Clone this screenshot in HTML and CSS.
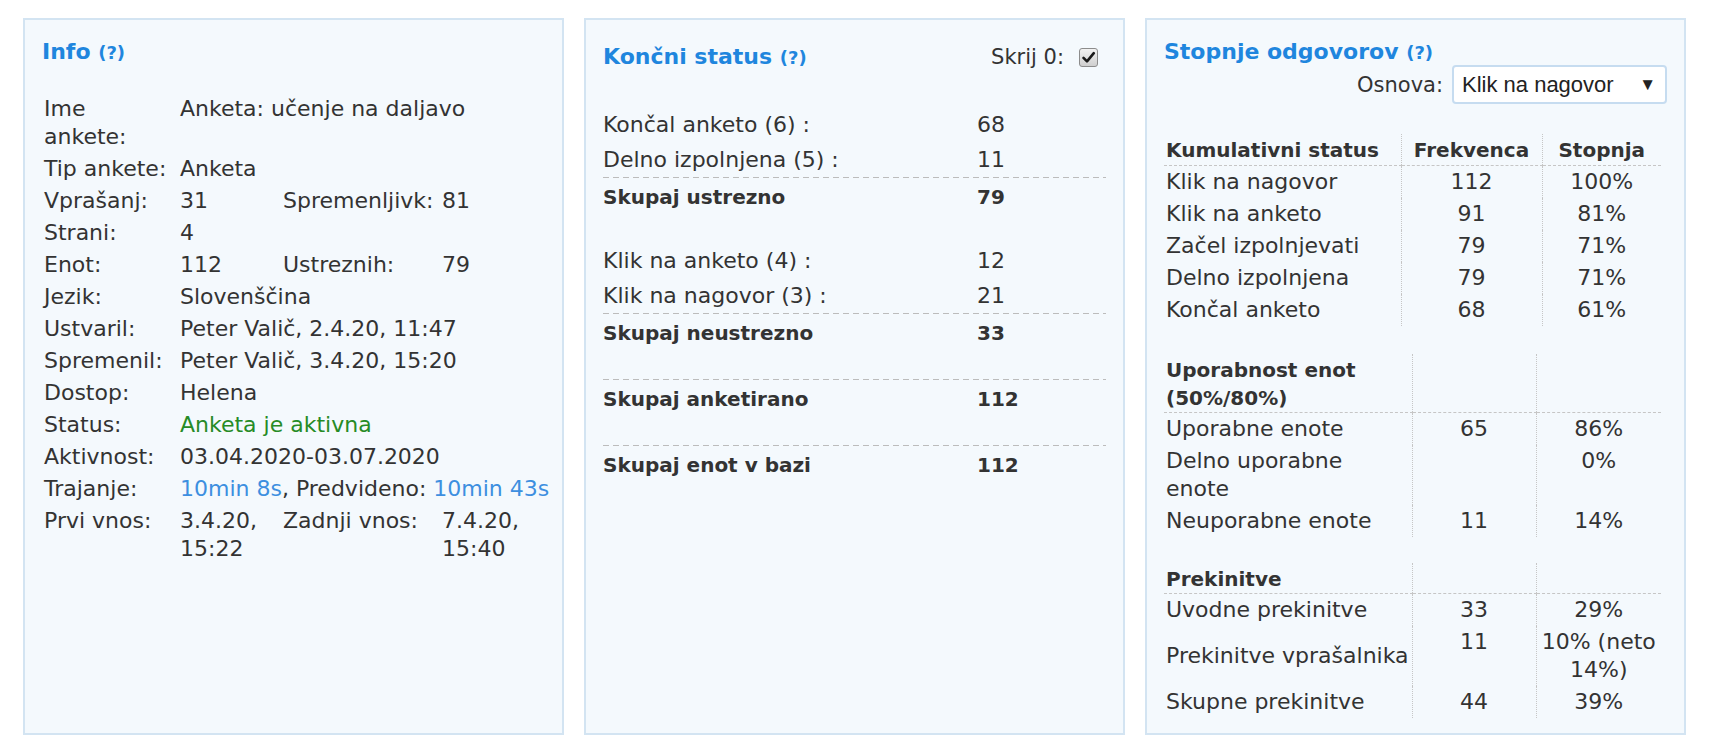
FILE: index.html
```html
<!DOCTYPE html>
<html lang="sl">
<head>
<meta charset="utf-8">
<title>Status ankete</title>
<link rel="stylesheet" href="styles.css">
</head>
<body>
<div class="dashboard">
  <section class="panel">
    <h2 class="panel-title">Info <span class="help">(?)</span></h2>
    <table class="info-table">
      <colgroup><col class="ic1"><col class="ic2"><col class="ic3"><col class="ic4"></colgroup>
      <tr><td class="lbl">Ime ankete:</td><td colspan="3">Anketa: učenje na daljavo</td></tr>
      <tr><td class="lbl">Tip ankete:</td><td colspan="3">Anketa</td></tr>
      <tr><td class="lbl">Vprašanj:</td><td>31</td><td>Spremenljivk:</td><td>81</td></tr>
      <tr><td class="lbl">Strani:</td><td colspan="3">4</td></tr>
      <tr><td class="lbl">Enot:</td><td>112</td><td>Ustreznih:</td><td>79</td></tr>
      <tr><td class="lbl">Jezik:</td><td colspan="3">Slovenščina</td></tr>
      <tr><td class="lbl">Ustvaril:</td><td colspan="3">Peter Valič, 2.4.20, 11:47</td></tr>
      <tr><td class="lbl">Spremenil:</td><td colspan="3">Peter Valič, 3.4.20, 15:20</td></tr>
      <tr><td class="lbl">Dostop:</td><td colspan="3">Helena</td></tr>
      <tr><td class="lbl">Status:</td><td colspan="3" class="active">Anketa je aktivna</td></tr>
      <tr><td class="lbl">Aktivnost:</td><td colspan="3">03.04.2020-03.07.2020</td></tr>
      <tr><td class="lbl">Trajanje:</td><td colspan="3" class="nowrap"><span class="time">10min 8s</span>, Predvideno: <span class="time">10min 43s</span></td></tr>
      <tr><td class="lbl">Prvi vnos:</td><td>3.4.20, 15:22</td><td>Zadnji vnos:</td><td>7.4.20, 15:40</td></tr>
    </table>
  </section>

  <section class="panel">
    <div class="ks-head">
      <h2 class="panel-title">Končni status <span class="help">(?)</span></h2>
      <label class="skrij">Skrij 0:<span class="checkbox"><svg viewBox="0 0 19 19" width="19" height="19"><path d="M4.5 9.8 L8 13.3 L14.8 5.2" fill="none" stroke="#1a1a1a" stroke-width="2.6" stroke-linecap="round" stroke-linejoin="round"/></svg></span></label>
    </div>
    <div class="ks-list">
      <div class="ks-row"><span class="ks-label">Končal anketo (6) :</span><span>68</span></div>
      <div class="ks-row"><span class="ks-label">Delno izpolnjena (5) :</span><span>11</span></div>
      <div class="ks-row total"><span class="ks-label">Skupaj ustrezno</span><span>79</span></div>
      <div class="ks-row"><span class="ks-label">Klik na anketo (4) :</span><span>12</span></div>
      <div class="ks-row"><span class="ks-label">Klik na nagovor (3) :</span><span>21</span></div>
      <div class="ks-row total"><span class="ks-label">Skupaj neustrezno</span><span>33</span></div>
      <div class="ks-row total"><span class="ks-label">Skupaj anketirano</span><span>112</span></div>
      <div class="ks-row total last"><span class="ks-label">Skupaj enot v bazi</span><span>112</span></div>
    </div>
  </section>

  <section class="panel">
    <h2 class="panel-title">Stopnje odgovorov <span class="help">(?)</span></h2>
    <div class="osnova">
      <span>Osnova:</span>
      <div class="select"><span>Klik na nagovor</span><span class="select-arrow">▼</span></div>
    </div>
    <table class="rate-table t-first">
      <colgroup><col class="r1"><col class="r2"><col class="r3"></colgroup>
      <tr><th class="lbl">Kumulativni status</th><th class="div">Frekvenca</th><th class="div">Stopnja</th></tr>
      <tr><td class="lbl">Klik na nagovor</td><td class="div">112</td><td class="div">100%</td></tr>
      <tr><td class="lbl">Klik na anketo</td><td class="div">91</td><td class="div">81%</td></tr>
      <tr><td class="lbl">Začel izpolnjevati</td><td class="div">79</td><td class="div">71%</td></tr>
      <tr><td class="lbl">Delno izpolnjena</td><td class="div">79</td><td class="div">71%</td></tr>
      <tr><td class="lbl">Končal anketo</td><td class="div">68</td><td class="div">61%</td></tr>
    </table>
    <table class="rate-table t-wide">
      <colgroup><col class="r1"><col class="r2"><col class="r3"></colgroup>
      <tr><th class="lbl">Uporabnost enot (50%/80%)</th><th class="div"></th><th class="div"></th></tr>
      <tr><td class="lbl">Uporabne enote</td><td class="div">65</td><td class="div">86%</td></tr>
      <tr><td class="lbl">Delno uporabne enote</td><td class="div"></td><td class="div top">0%</td></tr>
      <tr><td class="lbl">Neuporabne enote</td><td class="div">11</td><td class="div">14%</td></tr>
    </table>
    <table class="rate-table t-wide t-last">
      <colgroup><col class="r1"><col class="r2"><col class="r3"></colgroup>
      <tr><th class="lbl">Prekinitve</th><th class="div"></th><th class="div"></th></tr>
      <tr><td class="lbl">Uvodne prekinitve</td><td class="div">33</td><td class="div">29%</td></tr>
      <tr><td class="lbl nowrap">Prekinitve vprašalnika</td><td class="div top">11</td><td class="div">10% (neto 14%)</td></tr>
      <tr><td class="lbl">Skupne prekinitve</td><td class="div">44</td><td class="div">39%</td></tr>
    </table>
  </section>
</div>
</body>
</html>
```

FILE: styles.css
```css
* { box-sizing: border-box; }
html, body { margin: 0; padding: 0; background: #fff; }
body {
  font-family: "DejaVu Sans", "Noto Sans", sans-serif;
  font-size: 22px;
  color: #333;
}

.dashboard {
  display: flex;
  gap: 20px;
  height: 752px;
  padding: 18px 43px 17px 23px;
}

.panel {
  flex: 1 1 0;
  min-width: 0;
  background: #f4f9fd;
  border: 2px solid #d3e4f2;
  padding: 17px;
}

.panel-title {
  margin: 0;
  font-size: 22px;
  line-height: 30px;
  font-weight: bold;
  color: #1f86de;
}
.help { font-size: 18px; }

/* Info panel */
.info-table {
  margin-top: 25px;
  width: 100%;
  border-collapse: collapse;
  table-layout: fixed;
}
.ic1 { width: 136px; }
.ic2 { width: 103px; }
.ic3 { width: 159px; }
.info-table td {
  padding: 2px;
  line-height: 28px;
  vertical-align: top;
}
.info-table td.lbl { padding-right: 8px; }
.nowrap { white-space: nowrap; }
.active { color: #268b26; }
.time { color: #3d8fe0; }

/* Koncni status panel */
.ks-head {
  display: flex;
  align-items: center;
  justify-content: space-between;
  height: 37px;
  padding-top: 3px;
}
.skrij {
  display: flex;
  align-items: center;
  font-size: 21px;
}
.checkbox {
  display: block;
  width: 19px;
  height: 19px;
  margin: 0 8px 0 15px;
  border: 1px solid #8c8c8c;
  border-radius: 3px;
  background: linear-gradient(#f2f2f2, #cfcfcf);
  overflow: hidden;
}
.checkbox svg { display: block; margin: -1px; }
.ks-list { margin-top: 33px; }
.ks-row {
  display: flex;
  line-height: 28px;
  padding: 4px 0 3px;
}
.ks-label { width: 374px; flex: none; }
.ks-row.total {
  font-size: 20px;
  font-weight: bold;
  padding: 6px 0 3px;
  margin-bottom: 29px;
  background-image: repeating-linear-gradient(90deg, #bcbcbc 0 6px, transparent 6px 10px);
  background-size: 100% 1px;
  background-repeat: no-repeat;
  background-position: 0 0;
}
.ks-row.total.last { margin-bottom: 0; }

/* Stopnje panel */
.osnova {
  display: flex;
  justify-content: flex-end;
  align-items: center;
  gap: 9px;
  margin-top: -3px;
  font-size: 21px;
}
.select {
  width: 215px;
  height: 39px;
  display: flex;
  align-items: center;
  justify-content: space-between;
  padding: 0 9px 0 8px;
  background: #fff;
  border: 2px solid #c6dcf0;
  border-radius: 4px;
  font-family: "Liberation Sans", Arial, sans-serif;
  font-size: 22px;
  color: #222;
}
.select-arrow { font-size: 17px; }

.rate-table {
  width: 497px;
  margin-top: 28px;
  border-collapse: collapse;
  table-layout: fixed;
}
.t-first { margin-top: 30px; }
.t-last { margin-top: 26px; }
.t-first .r1 { width: 237px; }
.t-first .r2 { width: 141px; }
.t-wide .r1 { width: 248px; }
.t-wide .r2 { width: 124px; }
.rate-table th,
.rate-table td {
  padding: 2px;
  line-height: 28px;
  text-align: center;
  vertical-align: middle;
}
.rate-table th {
  font-size: 20px;
  font-weight: bold;
  padding: 2px 2px 1px;
  border-bottom: 1px dashed #c6c6c6;
}
.t-wide th { padding-bottom: 0; }
.rate-table .lbl { text-align: left; }
.rate-table .div { border-left: 1px dotted #c6c6c6; }
.rate-table .top { vertical-align: top; }
```
